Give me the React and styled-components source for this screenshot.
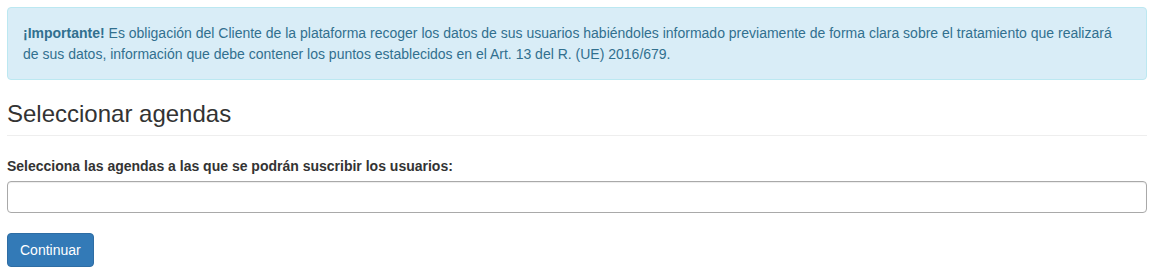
import styled, { createGlobalStyle } from 'styled-components'

const GlobalStyle = createGlobalStyle`
    body {
        margin: 0;
        font-family: "Liberation Sans", Arial, Helvetica, sans-serif;
        font-size: 14px;
        line-height: 20px;
        color: #333;
        background: #fff;
    }
`

const Page = styled.div`
    padding: 7px 8px 7px 7px;
`

const Alert = styled.div`
    padding: 15px 15px 14px;
    margin-bottom: 20px;
    border: 1px solid #bce8f1;
    border-radius: 4px;
    background-color: #d9edf7;
    color: #31708f;
    line-height: 21px;
`

const PageHeader = styled.div`
    padding-bottom: 8px;
    margin-bottom: 20px;
    border-bottom: 1px solid #eee;
`

const Title = styled.h3`
    margin: 0;
    font-size: 24px;
    font-weight: 400;
    line-height: 27px;
    color: #333;
`

const FormGroup = styled.div`
    margin-bottom: 20px;
`

const Label = styled.label`
    display: block;
    font-weight: bold;
    margin-bottom: 5px;
`

const Input = styled.input`
    display: block;
    box-sizing: border-box;
    width: 100%;
    height: 32px;
    padding: 6px 12px;
    font: inherit;
    border: 1px solid #a9a9a9;
    border-radius: 4px;
    box-shadow: inset 0 1px 1px rgba(0, 0, 0, 0.075);
    outline: none;
`

const Button = styled.button`
    display: inline-block;
    height: 34px;
    padding: 6px 12px;
    font: inherit;
    color: #fff;
    background-color: #337ab7;
    border: 1px solid #2e6da4;
    border-radius: 4px;
    cursor: pointer;
`

const App = () => {
    return (
        <>
            <GlobalStyle />
            <Page>
                <Alert>
                    <strong>¡Importante!</strong> Es obligación del Cliente de la plataforma recoger los datos de sus usuarios habiéndoles informado previamente de forma clara sobre el tratamiento que realizará de sus datos, información que debe contener los puntos establecidos en el Art. 13 del R. (UE) 2016/679.
                </Alert>
                <PageHeader>
                    <Title>Seleccionar agendas</Title>
                </PageHeader>
                <FormGroup>
                    <Label>Selecciona las agendas a las que se podrán suscribir los usuarios:</Label>
                    <Input type="text" />
                </FormGroup>
                <Button>Continuar</Button>
            </Page>
        </>
    )
}

export default App
